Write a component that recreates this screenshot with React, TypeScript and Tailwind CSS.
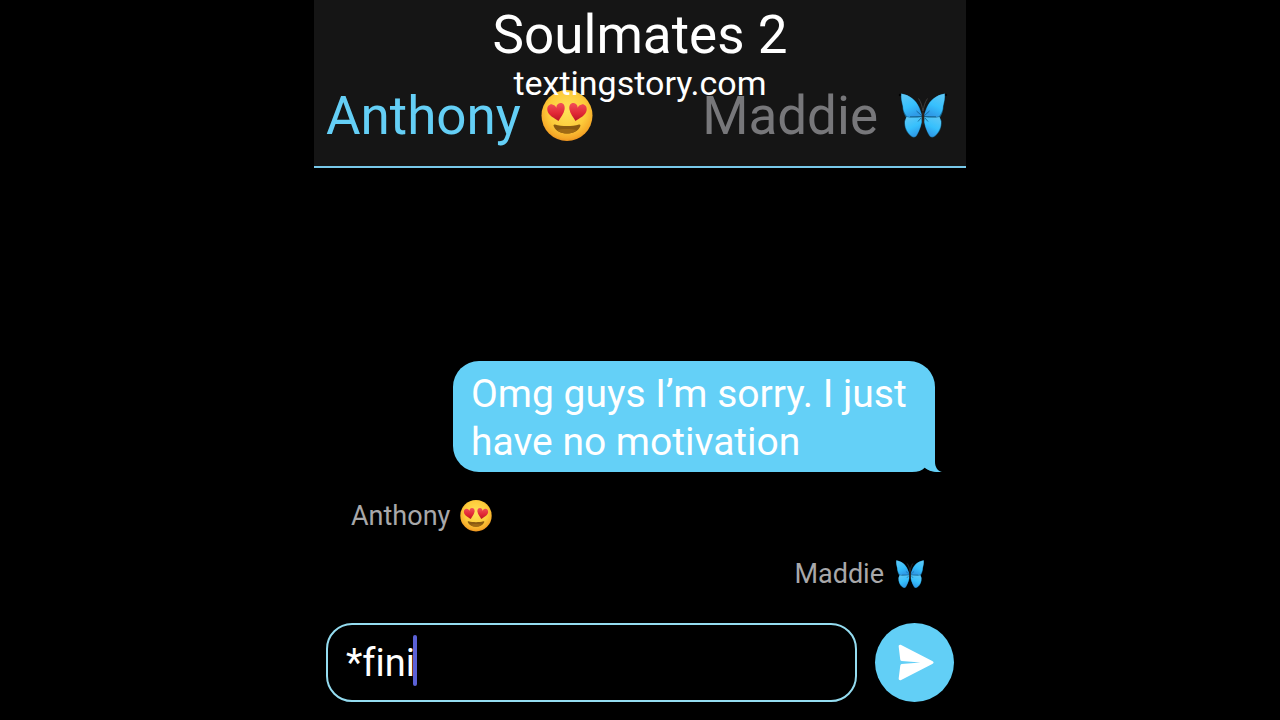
import { useState } from 'react'

interface Person {
  id: string
  name: string
}

const people: Person[] = [
  { id: 'anthony', name: 'Anthony' },
  { id: 'maddie', name: 'Maddie' },
]

function HeartEyes({ id, className }: { id: string; className: string }) {
  return (
    <svg viewBox="0 0 52 52" className={className} role="img" aria-label="Heart eyes">
      <defs>
        <radialGradient id={`${id}-face`} cx="0.5" cy="0.4" r="0.62">
          <stop offset="0" stopColor="#ffe25a" />
          <stop offset="0.6" stopColor="#fdcb3a" />
          <stop offset="0.88" stopColor="#f5a828" />
          <stop offset="1" stopColor="#e88a1c" />
        </radialGradient>
        <linearGradient id={`${id}-heart`} x1="0" y1="0" x2="0" y2="1">
          <stop offset="0" stopColor="#f25058" />
          <stop offset="0.6" stopColor="#e02634" />
          <stop offset="1" stopColor="#b81624" />
        </linearGradient>
      </defs>
      <circle cx="26" cy="25.5" r="25.5" fill={`url(#${id}-face)`} />
      <path
        d="M17.500 31C14 28.500 7 25.500 6.300 20C5.900 16.300 8.500 14 11.200 14.400C13.200 14.700 14.500 15.800 15.300 17.700C15.500 15 17 13.200 19.300 13C22.500 12.800 24.200 15.600 23.600 19.200C22.900 23.500 19.500 27.500 17.500 31Z"
        fill={`url(#${id}-heart)`}
      />
      <path
        d="M34.500 31C38 28.500 45 25.500 45.700 20C46.100 16.300 43.500 14 40.800 14.400C38.800 14.700 37.500 15.800 36.700 17.700C36.500 15 35 13.200 32.700 13C29.500 12.800 27.800 15.600 28.400 19.200C29.100 23.500 32.500 27.500 34.500 31Z"
        fill={`url(#${id}-heart)`}
      />
      <path
        d="M14 34.500C21 36.500 31 36.500 38 34.500C39.200 34.200 39.800 35 39.300 36.200C37.300 41 32 43.500 26 43.500C20 43.500 14.700 41 12.700 36.200C12.200 35 12.800 34.200 14 34.500Z"
        fill="#8a5a10"
      />
      <path d="M16 40C20 38.500 32 38.500 36 40C33.500 42.500 30 43.500 26 43.500C22 43.500 18.500 42.500 16 40Z" fill="#a06a14" />
    </svg>
  )
}

function Wing({ fill }: { fill: string }) {
  return (
    <>
      <circle cx="2" cy="2" r="1.2" fill="#000" />
      <path
        d="M3 0.500C11 1.500 18 6.500 21.500 14.500C22.800 18 24 21 24.500 23.500C24.500 31 22 37 19 42.500C17.500 45 14.500 45 12.500 43C8.500 39.500 6 34.500 6.500 28L8 24.500C6 21.500 4.500 17.500 4.500 13C3.500 9 2.500 5 3 0.500Z"
        fill="#166a94"
      />
      <path
        d="M3.500 0.800C11.500 2 17.700 7 21 14.500C22.300 18 23.500 20.800 24 23.300C18.500 24.300 13.500 24.200 9 23.500C6.800 20.500 5 17 5 13C4 9 3 5 3.500 0.800Z"
        fill={fill}
      />
      <path
        d="M8.500 24C13 24.800 18.500 24.700 24 23.900C24 31 21.700 37 18.500 42.200C17 44.300 14.700 44.300 13 42.500C9 39 6.700 34.300 7 28.500Z"
        fill={fill}
      />
      <path d="M23.500 22.500L18.500 18M23.500 23.500L12 23.700M23 25L20 28.500" stroke="#125d88" strokeWidth="0.8" fill="none" />
    </>
  )
}

function Butterfly({ id, className }: { id: string; className: string }) {
  return (
    <svg viewBox="0 0 50 46" className={className} role="img" aria-label="Butterfly">
      <defs>
        <linearGradient id={`${id}-wing`} x1="0" y1="0" x2="0.4" y2="1">
          <stop offset="0" stopColor="#63c8f4" />
          <stop offset="0.6" stopColor="#36c0fd" />
          <stop offset="1" stopColor="#2f9be8" />
        </linearGradient>
      </defs>
      <Wing fill={`url(#${id}-wing)`} />
      <g transform="translate(50 0) scale(-1 1)">
        <Wing fill={`url(#${id}-wing)`} />
      </g>
      <path d="M25 16C26.800 20 26.800 29 25 33C23.200 29 23.200 20 25 16Z" fill="#2b211c" />
      <path d="M25 18C24 13 23 9 20.500 5.500M25 18C26 13 27 9 29.500 5.500" stroke="#43403e" strokeWidth="0.9" fill="none" />
    </svg>
  )
}

function PersonEmoji({ person, place, className }: { person: Person; place: string; className: string }) {
  const id = `${place}-${person.id}`
  return person.id === 'anthony' ? (
    <HeartEyes id={id} className={className} />
  ) : (
    <Butterfly id={id} className={className} />
  )
}

function Header({ active, onSelect }: { active: string; onSelect: (id: string) => void }) {
  return (
    <header className="relative border-b-2 border-[#78c9ea] bg-[#151515] pt-[84px] pb-[18px]">
      <nav className="flex items-center justify-between pr-[18px] pl-3">
        {people.map((person) => (
          <button
            key={person.id}
            type="button"
            onClick={() => onSelect(person.id)}
            className={`flex items-center gap-5 text-[53px] leading-[64px] ${
              person.id === active ? 'text-[#64cff6]' : 'text-[#77777a]'
            }`}
          >
            {person.name}
            <PersonEmoji
              person={person}
              place="tab"
              className={person.id === 'anthony' ? 'size-[52px]' : 'h-[46px] w-[50px]'}
            />
          </button>
        ))}
      </nav>
      {/* title floats over the names */}
      <div className="pointer-events-none absolute inset-x-0 top-0 text-center text-white">
        <h1 className="text-[53px] leading-[70px]">Soulmates 2</h1>
        <p className="text-[34px] leading-[26px]">textingstory.com</p>
      </div>
    </header>
  )
}

function Bubble({ text }: { text: string }) {
  return (
    <div className="relative mr-[31px] max-w-[482px] self-end rounded-[26px] rounded-br-none bg-[#64d0f7] px-[18px] pt-[9px] pb-[6px] text-[39px] leading-[48px] text-white">
      {text}
      <svg viewBox="0 0 30 26" className="absolute -right-[7px] bottom-0 h-[26px] w-[30px]" aria-hidden="true">
        <path d="M0 26C6 26 10 24.500 13 21.500C17 24.500 22 26 30 26Z" fill="#000" />
        <path d="M12 20L23 14V16C23 21 25.500 25 30 26C23 26.500 17.500 25.500 13 22Z" fill="#64d0f7" />
      </svg>
    </div>
  )
}

function Composer() {
  const [draft, setDraft] = useState('*fini')

  return (
    <form
      onSubmit={(e) => e.preventDefault()}
      className="flex items-center gap-[18px] pt-[33px] pr-3 pb-[18px] pl-3"
    >
      <div className="relative min-w-0 flex-1">
        <input
          type="text"
          aria-label="Message"
          value={draft}
          onChange={(e) => setDraft(e.target.value)}
          className="block h-[79px] w-full rounded-[26px] border-2 border-[#94dcf0] bg-black px-[18px] text-[38px] text-white caret-[#5b61d6] outline-none [font-variant-ligatures:none]"
        />
        <span className="absolute top-3 left-[87px] h-[51px] w-1 rounded-full bg-[#5b61d6]" aria-hidden="true" />
      </div>
      <button
        type="submit"
        aria-label="Send"
        className="flex size-[79px] shrink-0 items-center justify-center rounded-full bg-[#62cff6]"
      >
        <svg viewBox="0 0 80 80" className="size-full" aria-hidden="true">
          <path
            d="M24 24C23.800 22.300 25 21.600 26.500 22.300L58 38.500C59.800 39.500 59.800 40.500 58 41.500L26.500 57.700C25 58.400 23.800 57.700 24 56L25.500 44C25.600 42.300 26.100 41.600 27 41.500L46 40L27 38.500C26.100 38.400 25.600 37.700 25.500 36.500Z"
            fill="#fff"
          />
        </svg>
      </button>
    </form>
  )
}

export default function App() {
  const [active, setActive] = useState('anthony')

  return (
    <div className="min-h-screen bg-black font-[Roboto,sans-serif]">
      <div className="mx-auto flex min-h-screen w-full max-w-[652px] flex-col">
        <Header active={active} onSelect={setActive} />
        <main className="flex flex-1 flex-col justify-end">
          <Bubble text="Omg guys I’m sorry. I just have no motivation" />
          <p className="mt-7 ml-[37px] flex h-8 items-center gap-[10px] text-[27px] leading-8 text-[#a8a8aa]">
            Anthony
            <PersonEmoji person={people[0]} place="note" className="size-8" />
          </p>
          <p className="mt-[26px] mr-10 flex h-8 items-center gap-[10px] self-end text-[27px] leading-8 text-[#a8a8aa]">
            Maddie
            <PersonEmoji person={people[1]} place="note" className="h-[29px] w-8" />
          </p>
        </main>
        <Composer />
      </div>
    </div>
  )
}
